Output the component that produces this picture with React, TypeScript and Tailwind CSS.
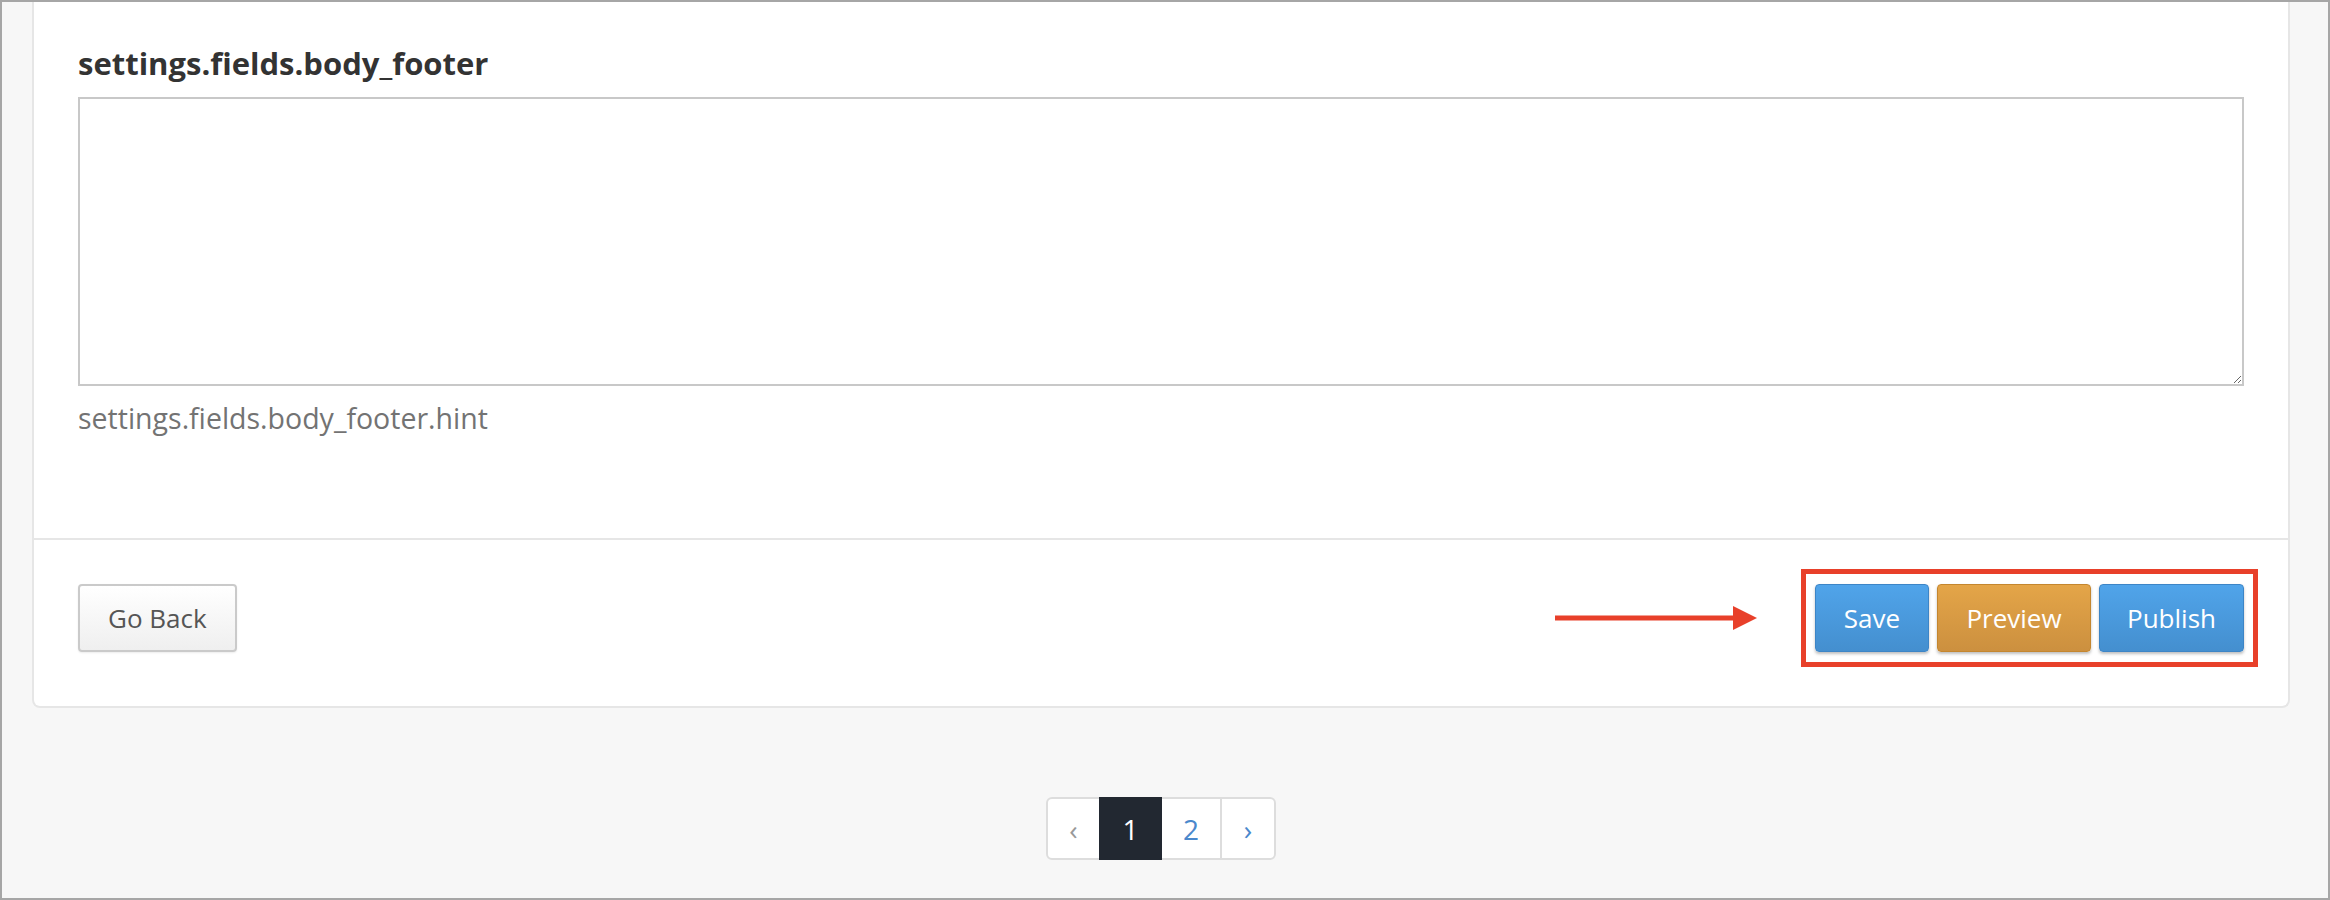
import React from "react";

const font = { fontFamily: '"Open Sans", "Liberation Sans", sans-serif' };

export default function App() {
  return (
    <div
      className="w-[2330px] h-[900px] border-2 border-[#a6a6a6] bg-[#f7f7f7] flex flex-col overflow-hidden"
      style={font}
    >
      {/* Panel */}
      <div className="ml-[30px] w-[2258px] bg-white border-2 border-t-0 border-[#e6e6e6] rounded-b-[8px] flex flex-col">
        <div className="pt-[40px] px-[44px] pb-[101px] flex flex-col">
          <div className="text-[31px] leading-[42px] font-bold text-[#333]">
            settings.fields.body_footer
          </div>
          <textarea
            className="mt-[13px] block w-full h-[289px] border-2 border-[#c8c8c8] bg-white outline-none"
            defaultValue=""
          />
          <div className="mt-[13px] text-[28.5px] leading-[38px] text-[#737373]">
            settings.fields.body_footer.hint
          </div>
        </div>
        <div className="border-t-2 border-[#e6e6e6] pt-[44px] pb-[54px] px-[44px] flex items-center justify-between">
          <button className="h-[68px] px-[28px] border-2 border-[#cacaca] rounded-[4px] bg-gradient-to-b from-white to-[#efefef] text-[26px] text-[#555] shadow-[0_1px_2px_rgba(0,0,0,0.08)] flex items-center justify-center">
            Go Back
          </button>
          <div className="flex items-center">
            <svg width="202" height="24" viewBox="0 0 202 24" className="mr-[44px] block">
              <rect x="0" y="9.5" width="182" height="5" fill="#e8402a" />
              <polygon points="178,0 202,12 178,24" fill="#e8402a" />
            </svg>
            <div className="-mr-[14px] -my-[15px] border-[5px] border-[#e8402a] px-[9px] py-[10px] flex items-center gap-[8px]">
              <button className="h-[68px] w-[114px] border border-[#3d85c6] rounded-[4px] bg-gradient-to-b from-[#50a4ea] to-[#448fcf] text-[26px] text-white shadow-[0_2px_3px_rgba(0,0,0,0.25)] flex items-center justify-center">
                Save
              </button>
              <button className="h-[68px] w-[154px] border border-[#c4862f] rounded-[4px] bg-gradient-to-b from-[#e4a548] to-[#cc903f] text-[26px] text-white shadow-[0_2px_3px_rgba(0,0,0,0.25)] flex items-center justify-center">
                Preview
              </button>
              <button className="h-[68px] w-[145px] border border-[#3d85c6] rounded-[4px] bg-gradient-to-b from-[#50a4ea] to-[#448fcf] text-[26px] text-white shadow-[0_2px_3px_rgba(0,0,0,0.25)] flex items-center justify-center">
                Publish
              </button>
            </div>
          </div>
        </div>
      </div>

      {/* Pagination */}
      <div className="ml-[30px] w-[2258px] mt-[89px] flex justify-center">
        <div className="h-[63px] flex border-2 border-[#dddddd] rounded-[6px] bg-white">
          <div className="w-[51px] flex items-center justify-center text-[28px] text-[#999]">
            ‹
          </div>
          <div className="-my-[2px] w-[63px] bg-[#222831] flex items-center justify-center text-[28px] text-white">
            1
          </div>
          <div className="w-[60px] border-r-2 border-[#dddddd] flex items-center justify-center text-[28px] text-[#4a88cc]">
            2
          </div>
          <div className="w-[52px] flex items-center justify-center text-[28px] text-[#4a88cc]">
            ›
          </div>
        </div>
      </div>
    </div>
  );
}
